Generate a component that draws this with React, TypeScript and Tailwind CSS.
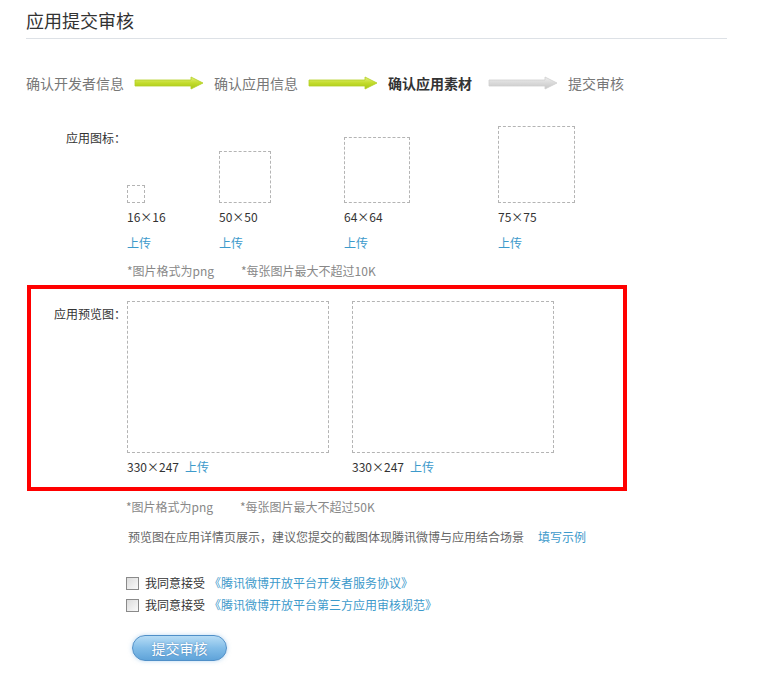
import React from 'react';

const font = { fontFamily: '"Noto Sans CJK SC", "Liberation Sans", sans-serif' };

const StepArrow: React.FC<{ active?: boolean }> = ({ active }) => (
    <svg width="70" height="14" viewBox="0 0 70 14" className="shrink-0">
        <defs>
            <linearGradient id={active ? 'ga' : 'gg'} x1="0" y1="0" x2="0" y2="1">
                <stop offset="0" stopColor={active ? '#e3f07a' : '#eeeeee'} />
                <stop offset="0.5" stopColor={active ? '#c3dc2c' : '#dadada'} />
                <stop offset="1" stopColor={active ? '#a6c418' : '#c6c6c6'} />
            </linearGradient>
        </defs>
        <path d="M1 4 H57 V1 L69 7 L57 13 V10 H1 Z" fill={`url(#${active ? 'ga' : 'gg'})`} stroke={active ? '#b3cf24' : '#cfcfcf'} strokeWidth="0.8" />
    </svg>
);

const icons = [
    { label: '16×16', box: 'w-[18px] h-[18px]', col: 'w-[92px]' },
    { label: '50×50', box: 'w-[52px] h-[52px]', col: 'w-[125px]' },
    { label: '64×64', box: 'w-[66px] h-[66px]', col: 'w-[154px]' },
    { label: '75×75', box: 'w-[77px] h-[77px]', col: 'w-[90px]' },
];

const Check: React.FC = () => (
    <span className="w-[13px] h-[13px] border border-[#8a8a8a] bg-gradient-to-br from-[#dcdcdc] to-[#fafafa] shrink-0" />
);

const App: React.FC = () => {
    return (
        <div className="w-[765px] h-[677px] bg-white pl-[26px] text-[12px] text-[#333]" style={font}>
            <div className="w-[701px] pt-[8px] h-[39px] leading-[24px] text-[18px] text-[#333] border-b border-[#dde1e6]">
                应用提交审核
            </div>

            <div className="mt-[34px] h-[20px] flex items-center text-[14px] leading-[20px] text-[#777]">
                <span>确认开发者信息</span>
                <span className="mx-[10px] flex"><StepArrow active /></span>
                <span>确认应用信息</span>
                <span className="mx-[10px] flex"><StepArrow active /></span>
                <span className="font-bold text-[#333]">确认应用素材</span>
                <span className="ml-[16px] mr-[10px] flex"><StepArrow /></span>
                <span>提交审核</span>
            </div>

            <div className="mt-[33px] flex">
                <div className="w-[100px] text-right leading-[24px]">应用图标：</div>
                <div className="ml-[1px]">
                    <div className="flex">
                        {icons.map(i => (
                            <div key={i.label} className={`${i.col} flex flex-col`}>
                                <div className="h-[77px] flex items-end">
                                    <div className={`${i.box} border border-dashed border-[#b4b4b4]`} />
                                </div>
                                <div className="mt-[5px] leading-[18px]">{i.label}</div>
                                <a className="mt-[8px] leading-[18px] text-[#3d9acb]">上传</a>
                            </div>
                        ))}
                    </div>
                    <div className="mt-[10px] leading-[18px] text-[#888] flex">
                        <span className="w-[114px]">*图片格式为png</span>
                        <span>*每张图片最大不超过10K</span>
                    </div>
                </div>
            </div>

            <div className="mt-[5px] ml-[1px] w-[600px] h-[206px] border-4 border-[#ff0000] flex pt-[12px]">
                <div className="w-[95px] text-right leading-[24px] pt-[1px]">应用预览图：</div>
                <div className="ml-[1px] flex gap-[23px]">
                    {[0, 1].map(k => (
                        <div key={k} className="flex flex-col">
                            <div className="w-[202px] h-[152px] border border-dashed border-[#b4b4b4]" />
                            <div className="mt-[5px] leading-[18px] flex gap-[6px]">
                                <span>330×247</span>
                                <a className="text-[#3d9acb]">上传</a>
                            </div>
                        </div>
                    ))}
                </div>
            </div>

            <div className="ml-[100px]">
                <div className="mt-[7px] leading-[18px] text-[#888] flex">
                    <span className="w-[114px]">*图片格式为png</span>
                    <span>*每张图片最大不超过50K</span>
                </div>
                <div className="mt-[12px] ml-[2px] leading-[18px] text-[#666] flex gap-[14px]">
                    <span>预览图在应用详情页展示，建议您提交的截图体现腾讯微博与应用结合场景</span>
                    <a className="text-[#3d9acb]">填写示例</a>
                </div>

                <div className="mt-[26px] flex items-center h-[22px]">
                    <Check />
                    <span className="ml-[6px]">我同意接受</span>
                    <a className="ml-[4px] text-[#3d9acb]">《腾讯微博开放平台开发者服务协议》</a>
                </div>
                <div className="flex items-center h-[22px]">
                    <Check />
                    <span className="ml-[6px]">我同意接受</span>
                    <a className="ml-[4px] text-[#3d9acb]">《腾讯微博开放平台第三方应用审核规范》</a>
                </div>

                <button className="mt-[19px] ml-[6px] w-[95px] h-[26px] rounded-full border border-[#4f8fc8] bg-gradient-to-b from-[#b6dcf5] via-[#82bde8] to-[#5fa3d9] text-white text-[14px] leading-[24px] shadow-[0_0_4px_rgba(120,180,230,0.5)] [text-shadow:0_0_2px_rgba(40,90,150,0.6)]">
                    提交审核
                </button>
            </div>
        </div>
    );
};

export default App;
